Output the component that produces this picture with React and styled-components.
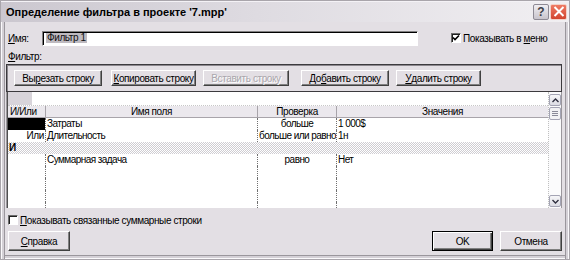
import React from "react";
import styled, { createGlobalStyle } from "styled-components";

const GlobalStyle = createGlobalStyle`
  html, body {
    margin: 0;
    padding: 0;
    background: #e3dfe4;
  }
  body {
    font-family: "Liberation Sans", Arial, sans-serif;
    font-size: 10px;
    letter-spacing: -0.4px;
    color: #000;
  }
`;

const rows = [
  { op: "", field: "Затраты", test: "больше", value: "1 000$", selected: true },
  { op: "Или", opRight: true, field: "Длительность", test: "больше или равно", value: "1н" },
  { op: "И", field: "", test: "", value: "", group: true },
  { op: "", field: "Суммарная задача", test: "равно", value: "Нет" },
  {},
  {},
  {},
  {},
];

const toolButtons = [
  { label: <>Вы<u>р</u>езать строку</>, width: 88, gap: 7 },
  { label: <><u>К</u>опировать строку</>, width: 85, gap: 9 },
  { label: <>Вставить строку</>, width: 86, gap: 7, disabled: true },
  { label: <>До<u>б</u>авить строку</>, width: 88, gap: 12 },
  { label: <><u>У</u>далить строку</>, width: 85, gap: 7 },
];

const App = () => {
  return (
    <>
      <GlobalStyle />
      <Window>
        <TitleBar>
          <Title>Определение фильтра в проекте '7.mpp'</Title>
          <TitleButtons>
            <HelpButton>?</HelpButton>
            <CloseButton>
              <svg width="12" height="11" viewBox="0 0 12 11">
                <path d="M1.5 1 L10.5 10 M10.5 1 L1.5 10" stroke="#fff" strokeWidth="2" />
              </svg>
            </CloseButton>
          </TitleButtons>
        </TitleBar>

        <Body>
          <NameRow>
            <NameLabel><u>И</u>мя:</NameLabel>
            <NameInput>
              <Selection>Фильтр 1</Selection>
            </NameInput>
            <CheckBox $checked>
              <svg width="8" height="8" viewBox="0 0 8 8">
                <path d="M1 3.5 L3 5.5 L7 1.5" stroke="#000" strokeWidth="1.6" fill="none" />
              </svg>
            </CheckBox>
            <CheckLabel>Показывать в <u>м</u>еню</CheckLabel>
          </NameRow>

          <FilterLabel><u>Ф</u>ильтр:</FilterLabel>

          <ToolFrame>
            {toolButtons.map((b, i) => (
              <Button key={i} $width={b.width} $gap={b.gap} $disabled={b.disabled}>
                {b.label}
              </Button>
            ))}
          </ToolFrame>

          <Grid>
            <RowsArea>
              <EditBar>
                <EditCell />
              </EditBar>
              <HeaderRow>
                <HeadCell $left>И/Или</HeadCell>
                <HeadCell>Имя поля</HeadCell>
                <HeadCell>Проверка</HeadCell>
                <HeadCell>Значения</HeadCell>
              </HeaderRow>
              {rows.map((r, i) => (
                <DataRow key={i} $group={r.group}>
                  <OpCell $selected={r.selected} $right={r.opRight} $bold={r.group}>
                    {r.op}
                  </OpCell>
                  <Cell $line={!r.group}>{r.field}</Cell>
                  <Cell $line={!r.group} $center>{r.test}</Cell>
                  <Cell $line={!r.group}>{r.value}</Cell>
                </DataRow>
              ))}
            </RowsArea>
            <ScrollBar>
              <ScrollButton>
                <svg width="7" height="5" viewBox="0 0 7 5">
                  <path d="M0.5 4 L3.5 1 L6.5 4" stroke="#303040" strokeWidth="1.4" fill="none" />
                </svg>
              </ScrollButton>
              <Thumb>
                <Grip />
                <Grip />
                <Grip />
              </Thumb>
              <Track />
              <ScrollButton>
                <svg width="7" height="5" viewBox="0 0 7 5">
                  <path d="M0.5 1 L3.5 4 L6.5 1" stroke="#303040" strokeWidth="1.4" fill="none" />
                </svg>
              </ScrollButton>
            </ScrollBar>
          </Grid>

          <SummaryRow>
            <CheckBox />
            <CheckLabel><u>П</u>оказывать связанные суммарные строки</CheckLabel>
          </SummaryRow>

          <Footer>
            <Button $width={62} $tall>
              <u>С</u>правка
            </Button>
            <Spacer />
            <Button $width={61} $tall $default>
              OK
            </Button>
            <Button $width={62} $tall $gap={7}>
              Отмена
            </Button>
          </Footer>
        </Body>
      </Window>
    </>
  );
};

export default App;

const Window = styled.div`
  width: 570px;
  height: 260px;
  box-sizing: border-box;
  display: flex;
  flex-direction: column;
  background: #e3dfe4;
  border: 1px solid #a9a5ab;
  overflow: hidden;
`;

const TitleBar = styled.div`
  height: 21px;
  flex-shrink: 0;
  display: flex;
  align-items: center;
  padding: 0 2px 0 5px;
  background: linear-gradient(90deg, #cbc7cf 0%, #dedbe1 45%, #f1eff2 100%);
  box-shadow: inset 0 1px #f4f2f6;
`;

const Title = styled.div`
  flex: 1;
  font-weight: bold;
  font-size: 11px;
  letter-spacing: 0;
  color: #000;
  white-space: nowrap;
`;

const TitleButtons = styled.div`
  display: flex;
  gap: 1px;
`;

const HelpButton = styled.div`
  width: 16px;
  height: 16px;
  box-sizing: border-box;
  display: flex;
  align-items: center;
  justify-content: center;
  font-size: 12px;
  font-weight: bold;
  letter-spacing: 0;
  color: #404048;
  background: linear-gradient(#f0eef2, #c8c4cc);
  border: 1px solid #8e8a94;
  border-radius: 2px;
`;

const CloseButton = styled.div`
  width: 17px;
  height: 16px;
  box-sizing: border-box;
  display: flex;
  align-items: center;
  justify-content: center;
  background: linear-gradient(#ee7a64, #d2442e);
  border: 1px solid #f2d0c8;
  border-radius: 2px;
`;

const Body = styled.div`
  flex: 1;
  display: flex;
  flex-direction: column;
  padding: 8px 7px 0 5px;
  box-shadow: inset 1px 0 #fbfafc, inset 3px 0 #d4d0d6, inset 4px 0 #9a969c,
    inset -1px 0 #fbfafc, inset -3px 0 #d4d0d6, inset -4px 0 #9a969c,
    inset 0 -1px #fbfafc, inset 0 -3px #d4d0d6, inset 0 -4px #9a969c;
`;

const NameRow = styled.div`
  display: flex;
  align-items: center;
  height: 16px;
`;

const NameLabel = styled.div`
  width: 34px;
  padding-left: 2px;
`;

const NameInput = styled.div`
  width: 376px;
  height: 15px;
  box-sizing: border-box;
  display: flex;
  align-items: center;
  padding-left: 3px;
  background: #fff;
  border: 1px solid;
  border-color: #808080 #fff #fff #808080;
  box-shadow: inset 1px 1px #000;
`;

const Selection = styled.span`
  background: #bebac0;
  line-height: 10px;
  padding: 0 1px;
  color: #101010;
`;

const CheckBox = styled.div`
  width: 10px;
  height: 10px;
  box-sizing: border-box;
  display: flex;
  align-items: center;
  justify-content: center;
  margin-left: ${(p) => (p.$checked ? "33px" : "2px")};
  background: #fff;
  border: 1px solid;
  border-color: #6c6c6c #fff #fff #6c6c6c;
  box-shadow: inset 1px 1px #202020;
  svg {
    visibility: ${(p) => (p.$checked ? "visible" : "hidden")};
  }
`;

const CheckLabel = styled.div`
  margin-left: 2px;
  white-space: nowrap;
`;

const FilterLabel = styled.div`
  margin-top: 5px;
  padding-left: 2px;
  height: 12px;
  line-height: 12px;
`;

const ToolFrame = styled.div`
  margin-top: 1px;
  height: 28px;
  box-sizing: border-box;
  display: flex;
  align-items: center;
  border: 1px solid #3c3a3e;
  box-shadow: inset 1px 1px #8c888e;
`;

const Button = styled.div`
  width: ${(p) => p.$width}px;
  height: ${(p) => (p.$tall ? 20 : 16)}px;
  margin-left: ${(p) => p.$gap || 0}px;
  box-sizing: border-box;
  flex-shrink: 0;
  display: flex;
  align-items: center;
  justify-content: center;
  white-space: nowrap;
  background: #e3dfe4;
  color: ${(p) => (p.$disabled ? "#aaa6ac" : "#000")};
  text-shadow: ${(p) => (p.$disabled ? "1px 1px #fff" : "none")};
  border: 1px solid;
  border-color: ${(p) => (p.$default ? "#000" : "#fff #404040 #404040 #fff")};
  box-shadow: ${(p) =>
    p.$default
      ? "inset 1px 1px #fff, inset -1px -1px #404040, inset -2px -2px #808080"
      : "inset -1px -1px #808080"};
`;

const Grid = styled.div`
  height: 116px;
  box-sizing: border-box;
  display: flex;
  background: #fff;
  border-left: 1px solid #9a969c;
  border-right: 1px solid #9a969c;
  box-shadow: inset 1px 0 #505050;
`;

const RowsArea = styled.div`
  width: 540px;
  margin-left: 1px;
  overflow: hidden;
`;

const EditBar = styled.div`
  height: 14px;
  border-bottom: 1px dotted #c8c8c8;
  box-sizing: border-box;
`;

const EditCell = styled.div`
  width: 24px;
  height: 13px;
  background: #d8d4da;
`;

const HeaderRow = styled.div`
  display: grid;
  grid-template-columns: 37px 212px 79px 212px;
  height: 12px;
  background: #ebe8ed;
  border-bottom: 1px solid #a8a4aa;
  box-sizing: border-box;
`;

const HeadCell = styled.div`
  text-align: ${(p) => (p.$left ? "left" : "center")};
  padding-left: ${(p) => (p.$left ? "2px" : "0")};
  line-height: 11px;
  border-left: ${(p) => (p.$left ? "none" : "1px solid #a8a4aa")};
`;

const DataRow = styled.div`
  display: grid;
  grid-template-columns: 37px 212px 79px 212px;
  height: 12px;
  background: ${(p) =>
    p.$group
      ? "repeating-conic-gradient(#cfcdd2 0 25%, #ffffff 0 50%) 0 0 / 2px 2px"
      : "#fff"};
`;

const OpCell = styled.div`
  line-height: 12px;
  text-align: ${(p) => (p.$right ? "right" : "left")};
  padding: 0 1px;
  font-weight: ${(p) => (p.$bold ? "bold" : "normal")};
  background: ${(p) => (p.$selected ? "#000" : "transparent")};
`;

const Cell = styled.div`
  line-height: 12px;
  padding: 0 1px;
  letter-spacing: -0.55px;
  white-space: nowrap;
  overflow: hidden;
  text-align: ${(p) => (p.$center ? "center" : "left")};
  border-left: ${(p) => (p.$line ? "1px dotted #707070" : "1px solid transparent")};
`;

const ScrollBar = styled.div`
  width: 13px;
  display: flex;
  flex-direction: column;
  padding-top: 2px;
  box-sizing: border-box;
  background: #fbfbfc;
  border-left: 1px dotted #c0c0c0;
`;

const ScrollButton = styled.div`
  width: 12px;
  height: 12px;
  box-sizing: border-box;
  display: flex;
  align-items: center;
  justify-content: center;
  background: linear-gradient(#f6f6f8, #dcdce4);
  border: 1px solid #a4a4b4;
  border-radius: 2px;
  margin-bottom: 1px;
`;

const Thumb = styled.div`
  width: 12px;
  height: 13px;
  box-sizing: border-box;
  display: flex;
  flex-direction: column;
  align-items: center;
  justify-content: center;
  gap: 1px;
  background: #f2f2f4;
  border: 1px solid #a4a4b4;
  border-radius: 2px;
`;

const Grip = styled.div`
  width: 6px;
  height: 1px;
  background: #8a8a98;
`;

const Track = styled.div`
  flex: 1;
`;

const SummaryRow = styled.div`
  margin-top: 6px;
  height: 12px;
  display: flex;
  align-items: center;
`;

const Footer = styled.div`
  margin-top: 5px;
  display: flex;
  padding-left: 2px;
`;

const Spacer = styled.div`
  flex: 1;
`;
